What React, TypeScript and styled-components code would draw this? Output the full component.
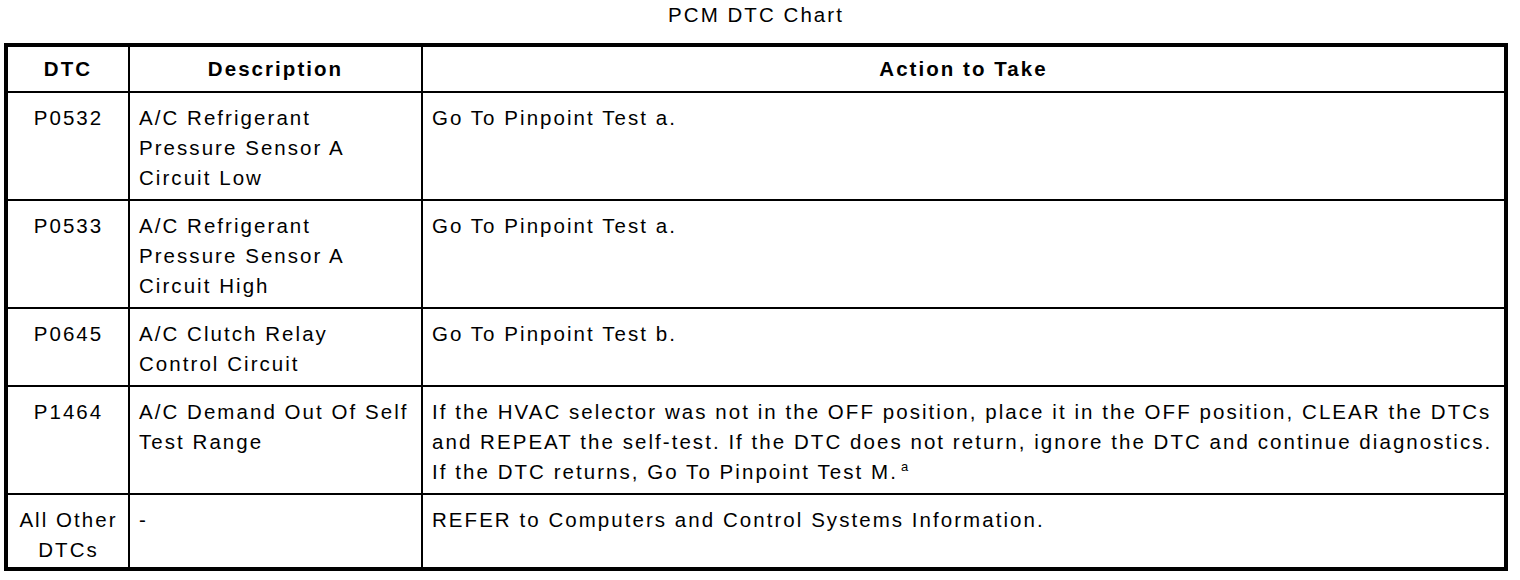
import React from 'react';
import styled, { createGlobalStyle } from 'styled-components';

const GlobalStyle = createGlobalStyle`
  html, body { margin: 0; padding: 0; background: #fff; }
  body { font-family: "Liberation Sans", Arial, sans-serif; color: #000; }
`;

const Page = styled.div`
  width: 1520px;
  height: 580px;
  padding: 0 0 0 4px;
  box-sizing: border-box;
  letter-spacing: 2.05px;
`;

const Title = styled.div`
  height: 43px;
  width: 1504px;
  box-sizing: border-box;
  padding-top: 2px;
  text-align: center;
  font-size: 20.5px;
  line-height: 26px;
`;

const Table = styled.table`
  width: 1504px;
  table-layout: fixed;
  border-collapse: collapse;
  border: 4px solid #000;
  font-size: 20.5px;
`;

const Head = styled.th`
  border: 2px solid #000;
  padding: 7px 4px 7px;
  line-height: 30px;
  font-weight: bold;
  text-align: center;
  vertical-align: top;
`;

const BodyRow = styled.tr<{ $last?: boolean }>`
  & > td {
    padding-bottom: ${(p) => (p.$last ? '2px' : '6px')};
  }
`;

const Cell = styled.td<{ $center?: boolean }>`
  border: 2px solid #000;
  padding: 10px 8px 6px 9px;
  line-height: 30px;
  vertical-align: top;
  text-align: ${(p) => (p.$center ? 'center' : 'left')};
`;

const Line = styled.span`
  display: block;
  white-space: nowrap;
`;

const Sup = styled.sup`
  font-size: 13px;
  line-height: 0;
  vertical-align: 8px;
  margin-left: 3px;
  letter-spacing: 0;
`;

type Row = { dtc: string[]; desc: string[]; action: React.ReactNode[] };

const rows: Row[] = [
  {
    dtc: ['P0532'],
    desc: ['A/C Refrigerant', 'Pressure Sensor A', 'Circuit Low'],
    action: ['Go To Pinpoint Test a.'],
  },
  {
    dtc: ['P0533'],
    desc: ['A/C Refrigerant', 'Pressure Sensor A', 'Circuit High'],
    action: ['Go To Pinpoint Test a.'],
  },
  {
    dtc: ['P0645'],
    desc: ['A/C Clutch Relay', 'Control Circuit'],
    action: ['Go To Pinpoint Test b.'],
  },
  {
    dtc: ['P1464'],
    desc: ['A/C Demand Out Of Self', 'Test Range'],
    action: [
      'If the HVAC selector was not in the OFF position, place it in the OFF position, CLEAR the DTCs',
      'and REPEAT the self-test. If the DTC does not return, ignore the DTC and continue diagnostics.',
      <>
        If the DTC returns, Go To Pinpoint Test M.<Sup>a</Sup>
      </>,
    ],
  },
  {
    dtc: ['All Other', 'DTCs'],
    desc: ['-'],
    action: ['REFER to Computers and Control Systems Information.'],
  },
];

const lines = (items: React.ReactNode[]) => items.map((t, i) => <Line key={i}>{t}</Line>);

const App = () => {
  return (
    <Page>
      <GlobalStyle />
      <Title>PCM DTC Chart</Title>
      <Table>
        <colgroup>
          <col style={{ width: 123 }} />
          <col style={{ width: 293 }} />
          <col />
        </colgroup>
        <thead>
          <tr>
            <Head>DTC</Head>
            <Head>Description</Head>
            <Head>Action to Take</Head>
          </tr>
        </thead>
        <tbody>
          {rows.map((r, i) => (
            <BodyRow key={i} $last={i === rows.length - 1}>
              <Cell $center>{lines(r.dtc)}</Cell>
              <Cell>{lines(r.desc)}</Cell>
              <Cell>{lines(r.action)}</Cell>
            </BodyRow>
          ))}
        </tbody>
      </Table>
    </Page>
  );
};

export default App;
